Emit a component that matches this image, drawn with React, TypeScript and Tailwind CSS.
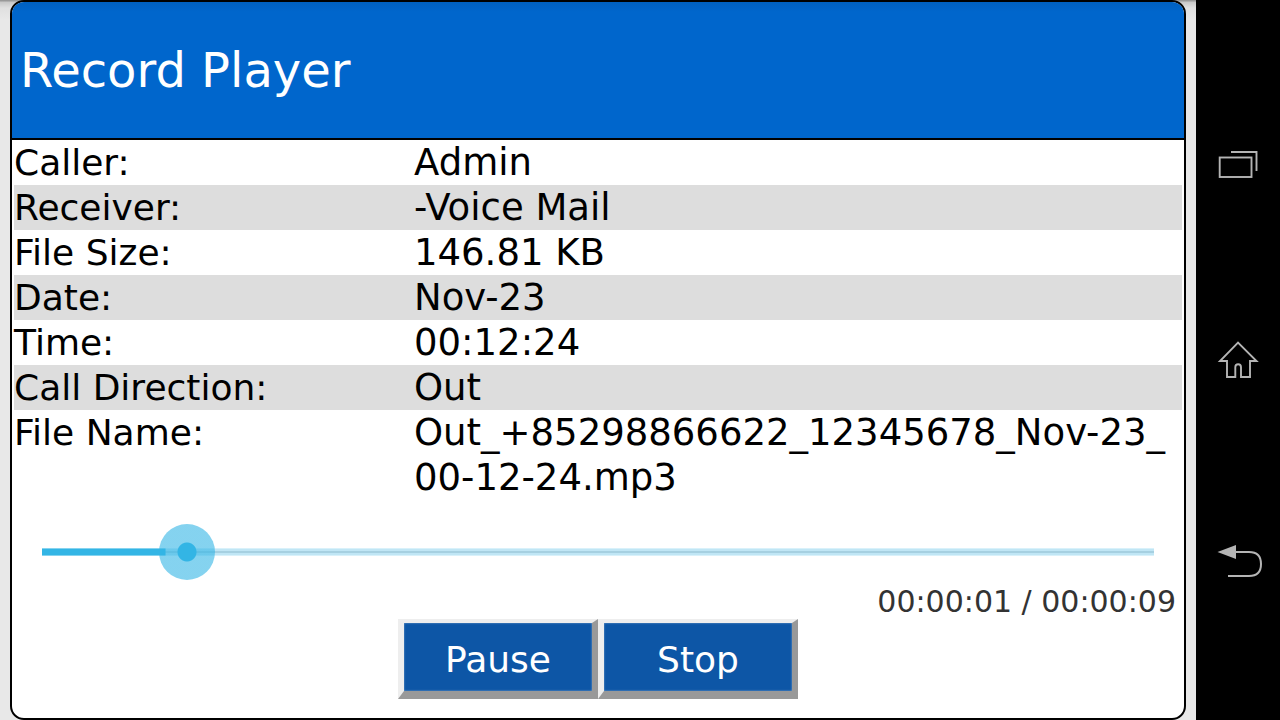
import { useState } from "react";

const details = [
  { label: "Caller:", value: ["Admin"] },
  { label: "Receiver:", value: ["-Voice Mail"] },
  { label: "File Size:", value: ["146.81 KB"] },
  { label: "Date:", value: ["Nov-23"] },
  { label: "Time:", value: ["00:12:24"] },
  { label: "Call Direction:", value: ["Out"] },
  {
    label: "File Name:",
    value: ["Out_+85298866622_12345678_Nov-23_", "00-12-24.mp3"],
  },
];

const DURATION = 9000;

function formatTime(ms: number) {
  const total = Math.floor(ms / 1000);
  const parts = [Math.floor(total / 3600), Math.floor(total / 60) % 60, total % 60];
  return parts.map((part) => String(part).padStart(2, "0")).join(":");
}

function DetailTable() {
  return (
    <table className="w-full table-fixed text-left text-black">
      <tbody>
        {details.map((row) => (
          <tr key={row.label} className="even:bg-[#dddddd]">
            <th scope="row" className="w-100 p-0 align-top text-[36px]/[45px] font-normal">
              {row.label}
            </th>
            <td className="p-0 align-top text-[37px]/[45px]">
              {row.value.map((line) => (
                <span key={line} className="block whitespace-nowrap">
                  {line}
                </span>
              ))}
            </td>
          </tr>
        ))}
      </tbody>
    </table>
  );
}

function SeekBar() {
  const [position, setPosition] = useState(1000);
  const played = (position / DURATION) * 100;

  return (
    <div>
      <div className="px-7">
        <input
          type="range"
          aria-label="Position"
          min={0}
          max={DURATION}
          value={position}
          onChange={(e) => setPosition(Number(e.target.value))}
          style={{ backgroundSize: `${played}% 8px, 100% 8px` }}
          className="block h-14 w-full appearance-none bg-[linear-gradient(#85d3ef_1px,#33b5e5_1px_7px,#85d3ef_7px),linear-gradient(#d9f1fa_1px,#c0e6f5_1px_3px,#a6d0e1_3px_5px,#c0e6f5_5px_7px,#d9f1fa_7px)] bg-left bg-no-repeat [&::-webkit-slider-thumb]:size-14 [&::-webkit-slider-thumb]:appearance-none [&::-webkit-slider-thumb]:rounded-full [&::-webkit-slider-thumb]:bg-[radial-gradient(circle,#33b5e5_9px,rgba(51,181,229,0.6)_10px)]"
        />
      </div>
      <p className="pt-1 pr-1.5 text-right text-[30px]/[35px] text-[#333333]">
        {formatTime(position)} / {formatTime(DURATION)}
      </p>
    </div>
  );
}

function PlayerButton({ label }: { label: string }) {
  return (
    <button
      type="button"
      className="h-20 w-50 border-t-4 border-r-6 border-b-8 border-l-6 border-t-[#eeeeee] border-r-[#999999] border-b-[#999999] border-l-[#eeeeee] bg-[#0d56a6] pt-1 text-[36px]/[45px] text-white shadow-[inset_0_0_2px_#8fb0d5]"
    >
      {label}
    </button>
  );
}

function NavBar() {
  return (
    <nav className="flex w-21 shrink-0 flex-col justify-evenly bg-black text-[#b4b4b4]">
      <button type="button" aria-label="Recent apps">
        <svg viewBox="0 0 84 60" className="h-15 w-21" fill="none" stroke="currentColor" strokeWidth="1.9">
          <rect x="23.7" y="22.5" width="31.8" height="19.5" />
          <path d="M35 17H60.5V36" />
        </svg>
      </button>
      <button type="button" aria-label="Home">
        <svg viewBox="0 0 84 60" className="h-15 w-21" fill="none" stroke="currentColor" strokeWidth="1.9">
          <path d="M42 12.6L24 31H31V47H39.3V37.3C39.3 33.3 45 33.3 45 37.3V47H54V31H60.5Z" />
        </svg>
      </button>
      <button type="button" aria-label="Back">
        <svg viewBox="0 0 84 60" className="h-15 w-21" fill="none" stroke="currentColor" strokeWidth="2">
          <path d="M39 27H53C61 27 65 31 65 39S61 51 53 51H32" />
          <path d="M21.5 27L40 20V34Z" fill="currentColor" stroke="none" />
        </svg>
      </button>
    </nav>
  );
}

export default function App() {
  return (
    <div className="flex min-h-screen font-['DejaVu_Sans',sans-serif]">
      <div className="flex flex-1 bg-[linear-gradient(#999999_1px,#c8c8c8_2px,#e0e0e0_8px,#e8e8e8_20px)] px-2.5">
        <main className="flex flex-1 flex-col overflow-hidden rounded-[14px] border-2 border-black bg-white">
          <header className="flex h-[138px] items-center border-b-2 border-black bg-[linear-gradient(#0060c0,#0066cc_10px)] px-2">
            <h1 className="text-5xl text-white">Record Player</h1>
          </header>
          <div className="flex flex-col gap-6 px-0.5">
            <DetailTable />
            <SeekBar />
          </div>
          <div className="flex justify-center">
            <PlayerButton label="Pause" />
            <PlayerButton label="Stop" />
          </div>
        </main>
      </div>
      <NavBar />
    </div>
  );
}
